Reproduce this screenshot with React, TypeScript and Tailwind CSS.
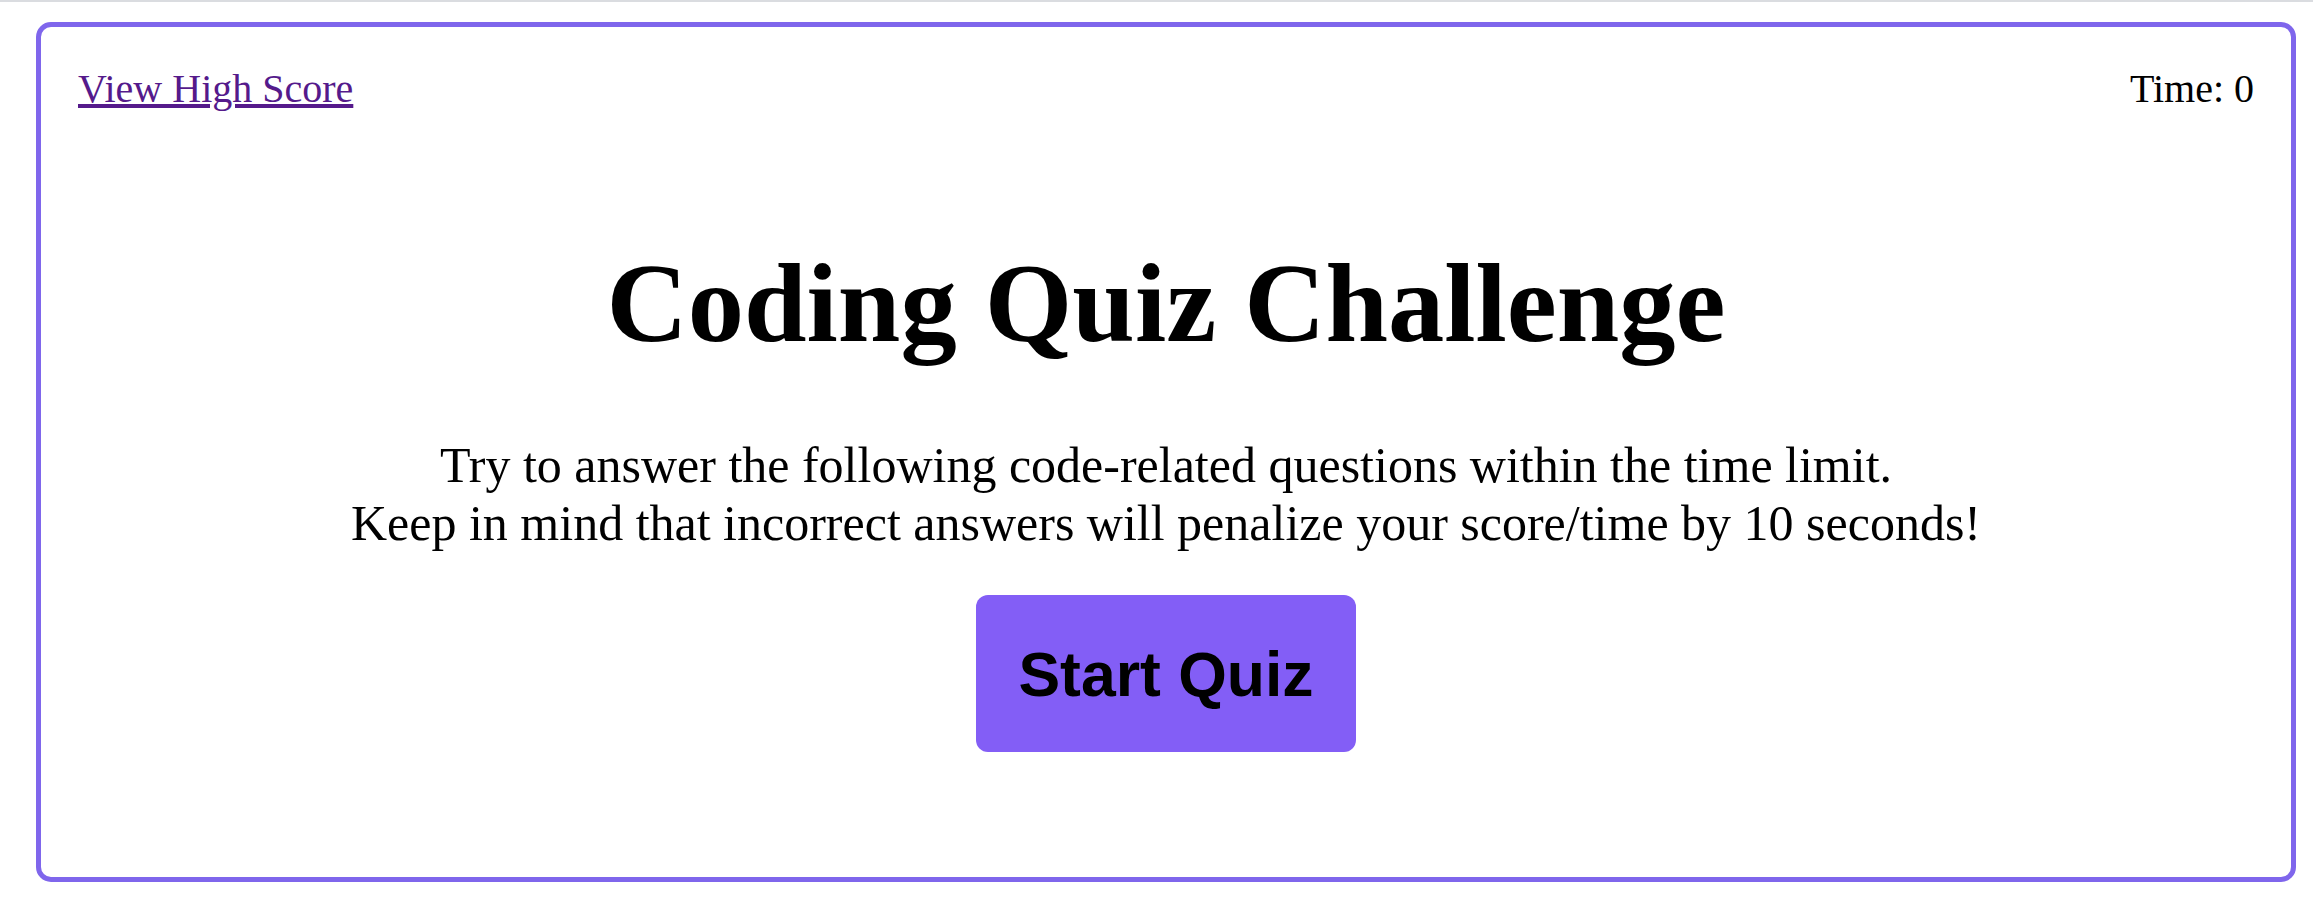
import React from "react";

const serif = "font-['Liberation_Serif','Times_New_Roman',serif]";

export default function App() {
  return (
    <div className={`min-h-[913px] bg-white text-black ${serif}`}>
      {/* browser top edge */}
      <div className="h-[2px] bg-[#dadce0]" />
      <div className="ml-[36px] mt-[20px] w-[2260px] h-[860px] border-[5px] border-[#7f66ec] rounded-[15px] px-[37px] pt-[39px]">
        {/* header */}
        <header className="flex justify-between items-start text-[40px] leading-[46px]">
          <a href="#" className="text-[#551a8b] underline">
            View High Score
          </a>
          <span>Time: 0</span>
        </header>

        {/* intro */}
        <main className="flex flex-col items-center text-center">
          <h1 className="mt-[127px] text-[112.5px] leading-[129px] font-bold">
            Coding Quiz Challenge
          </h1>
          <p className="mt-[69px] text-[50px] leading-[57.5px]">
            Try to answer the following code-related questions within the time limit.
            <br />
            Keep in mind that incorrect answers will penalize your score/time by 10 seconds!
          </p>
          <button className="mt-[43px] bg-[#835ef6] rounded-[12px] px-[42.5px] py-[42.5px] text-[62.5px] leading-[72px] font-bold font-['Liberation_Sans',Arial,sans-serif] text-black">
            Start Quiz
          </button>
        </main>
      </div>
    </div>
  );
}
